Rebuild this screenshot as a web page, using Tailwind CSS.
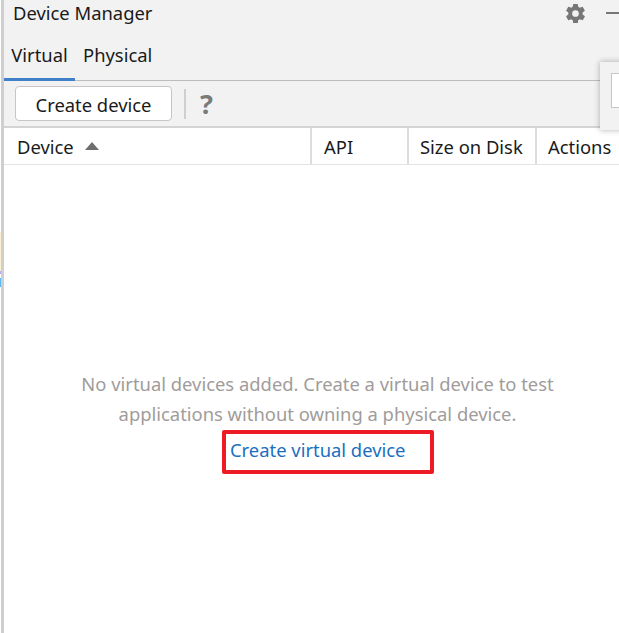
<!DOCTYPE html>
<html lang="en">
<head>
  <meta charset="UTF-8">
  <title>Device Manager</title>
  <script src="https://cdn.jsdelivr.net/npm/@tailwindcss/browser@4"></script>
</head>
<body class="bg-white overflow-hidden">
  <div class="relative flex h-[633px] w-[619px] overflow-hidden font-['Noto_Sans',sans-serif] text-[18.4px] text-[#1a1a1a]">

    <!-- Left edge, with the sliver of the window behind it -->
    <div class="flex w-[1px] shrink-0 flex-col bg-white pt-[232px]">
      <div class="h-[39px] bg-[#fbf0cf]"></div>
      <div class="h-[3px] bg-[#b9a5f0]"></div>
      <div class="h-[4px]"></div>
      <div class="h-[9px] bg-[#5cb8f5]"></div>
    </div>
    <div class="w-[3px] shrink-0 bg-[#cfcfcf]"></div>

    <div class="flex min-w-0 flex-1 flex-col">
      <!-- Title -->
      <div class="flex h-[32px] items-center justify-between bg-[#f2f2f2] pb-[6px] pl-[9px]">
        <span class="whitespace-nowrap">Device Manager</span>
        <div class="flex items-center gap-[19px]">
          <svg class="h-[23px] w-[23px]" viewBox="0 0 24 24" fill="#777">
            <path fill-rule="evenodd" d="M19.4 13c.04-.33.06-.66.06-1s-.02-.67-.06-1l2.1-1.65a.5.5 0 0 0 .12-.64l-2-3.46a.5.5 0 0 0-.6-.22l-2.5 1a7.3 7.3 0 0 0-1.7-1l-.38-2.65A.5.5 0 0 0 14 2h-4a.5.5 0 0 0-.5.42l-.38 2.65a7.7 7.7 0 0 0-1.7 1l-2.5-1a.5.5 0 0 0-.6.22l-2 3.46a.5.5 0 0 0 .12.64L4.55 11a8 8 0 0 0 0 2l-2.1 1.65a.5.5 0 0 0-.12.64l2 3.46c.12.22.38.3.6.22l2.5-1c.52.4 1.08.74 1.7 1l.38 2.65c.04.24.25.42.5.42h4c.25 0 .46-.18.5-.42l.38-2.65a7.7 7.7 0 0 0 1.7-1l2.5 1c.22.08.48 0 .6-.22l2-3.46a.5.5 0 0 0-.12-.64L19.4 13zM12 15.5a3.5 3.5 0 1 1 0-7 3.5 3.5 0 0 1 0 7z"/>
          </svg>
          <div class="h-[2px] w-[13px] bg-[#777]"></div>
        </div>
      </div>

      <!-- Tabs -->
      <div class="flex h-[49px] items-stretch border-b-[1px] border-[#bdbdbd] bg-[#f2f2f2]">
        <div class="-mb-[1px] flex w-[71px] items-center justify-center border-b-[3px] border-[#3f80c8]">Virtual</div>
        <div class="flex items-center pb-[2px] pl-[8px]">Physical</div>
      </div>

      <!-- Toolbar -->
      <div class="flex h-[47px] items-center border-b-[2px] border-[#d4d4d4] bg-[#f2f2f2] pl-[11px]">
        <button class="flex h-[35px] w-[157px] items-center justify-center rounded-[4px] border-[1.5px] border-[#c6c6c6] bg-white pt-[3px]">Create device</button>
        <div class="ml-[12px] h-[30px] w-[2px] bg-[#cfcfcf]"></div>
        <span class="ml-[14px] text-[27px] font-bold leading-none text-[#7a7a7a]">?</span>
      </div>

      <!-- Table header -->
      <div class="flex h-[37px] items-stretch border-b-[1px] border-[#e3e3e3] bg-white">
        <div class="flex w-[308px] items-center gap-[11px] border-r-[2px] border-[#dcdcdc] pl-[13px] pt-[2px]">
          <span>Device</span>
          <svg class="-mt-[3px] h-[8px] w-[14px]" viewBox="0 0 14 8" fill="#6e6e6e"><path d="M7 0l7 8H0z"/></svg>
        </div>
        <div class="flex w-[97px] items-center border-r-[2px] border-[#dcdcdc] pl-[12px] pt-[2px]">API</div>
        <div class="flex w-[128px] items-center whitespace-nowrap border-r-[2px] border-[#dcdcdc] pl-[11px] pt-[2px]">Size on Disk</div>
        <div class="flex items-center pl-[11px] pt-[2px]">Actions</div>
      </div>

      <!-- Empty state -->
      <div class="flex flex-1 flex-col items-center bg-white pl-[12px] pt-[204px]">
        <p class="text-center leading-[30px] text-[#a09c9a]">No virtual devices added. Create a virtual device to test<br>applications without owning a physical device.</p>
        <div class="ml-[21px] mt-[1px] flex h-[44px] w-[212px] items-center rounded-[2px] border-[4px] border-[#ed1c24] pb-[4px] pl-[4px]">
          <a href="#" class="whitespace-nowrap text-[#1a6fc0]">Create virtual device</a>
        </div>
      </div>
    </div>

    <!-- Floating popup clipped by the window edge -->
    <div class="absolute left-[600px] top-[62px] h-[68px] w-[40px] bg-[#f2f2f2] pl-[11px] pt-[11px] shadow-[0_0_6px_rgba(0,0,0,0.3)]">
      <div class="h-[35px] w-full border border-[#c6c6c6] bg-white"></div>
    </div>
  </div>
</body>
</html>
